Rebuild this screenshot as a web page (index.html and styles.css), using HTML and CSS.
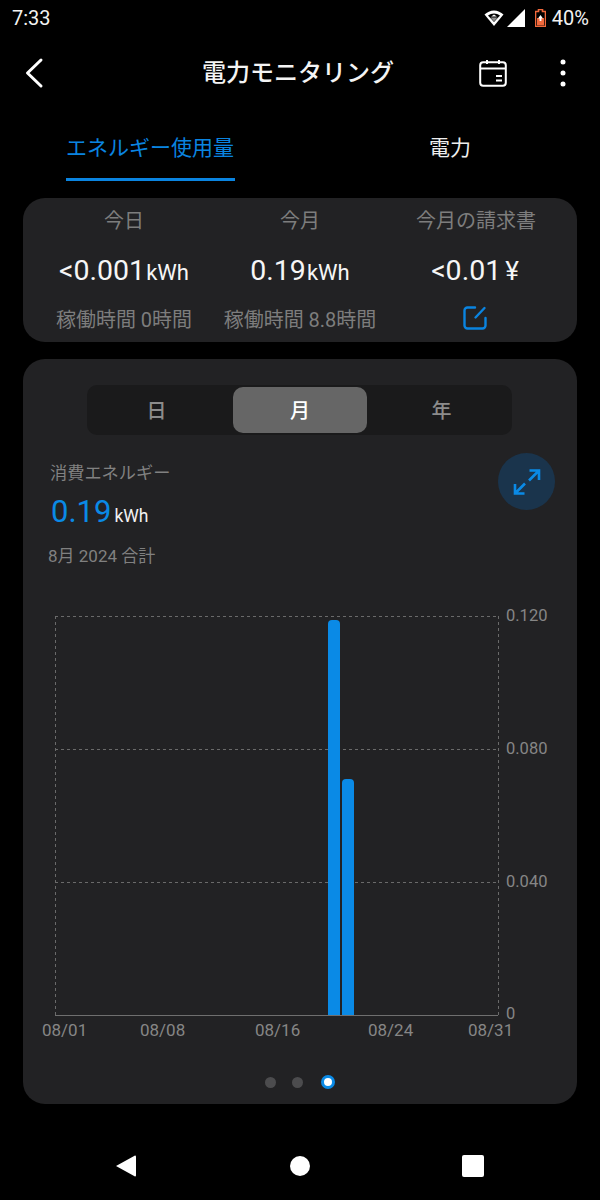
FILE: index.html
```html
<!DOCTYPE html>
<html lang="ja">
<head>
<meta charset="utf-8">
<title>電力モニタリング</title>
<link rel="stylesheet" href="styles.css">
</head>
<body>
<div class="phone">
  <div class="status">
    <span class="clock">7:33</span>
    <div class="status-right">
      <svg class="ic-wifi" width="20" height="18" viewBox="0 0 20 18"><path d="M10 17 0.5 5.5C3 3.2 6.3 1.5 10 1.5s7 1.7 9.5 4Z" fill="#fff"/><path d="M10 13 4 6.5C5.8 5.2 7.8 4.5 10 4.5s4.2.7 6 2Z" fill="#000"/><path d="M10 12.5 6.5 8.6h7Z" fill="#8f8f8f"/><path d="M7.2 7.4h5.6L10 5.6Z" fill="#fff"/></svg>
      <svg class="ic-cell" width="18" height="18" viewBox="0 0 18 18"><path d="M18 0V18H0Z" fill="#fff"/></svg>
      <svg class="ic-batt" width="11" height="18" viewBox="0 0 11 18"><path d="M3.5 0.5h4v2h3v15H0.5v-15h3Z" fill="none" stroke="#f2693c" stroke-width="1.6"/><rect x="2" y="9" width="7" height="7.5" fill="#f2693c"/><path d="M5.5 6 8 9.5H6.4V12H4.6V9.5H3Z" fill="#fff"/></svg>
      <span class="percent">40%</span>
    </div>
  </div>

  <div class="toolbar">
    <svg class="ic-back" width="20" height="32" viewBox="0 0 20 32"><path d="M17 3 3.500 16 17 29" fill="none" stroke="#fff" stroke-width="3" stroke-linecap="round" stroke-linejoin="round"/></svg>
    <h1 class="title">電力モニタリング</h1>
    <svg class="ic-cal" width="28" height="28" viewBox="0 0 28 28"><rect x="1.2" y="3.2" width="25.6" height="23.6" rx="3" fill="none" stroke="#fff" stroke-width="2"/><path d="M1.5 9.5H26.5" stroke="#fff" stroke-width="2"/><path d="M8 1V5M20 1V5" stroke="#fff" stroke-width="2"/><path d="M17 17H23M17 21.5H23" stroke="#fff" stroke-width="2"/></svg>
    <div class="more"><i></i><i></i><i></i></div>
  </div>

  <div class="tabs">
    <div class="tab tab-on">エネルギー使用量</div>
    <div class="tab tab-off">電力</div>
  </div>

  <section class="card summary">
    <div class="cell"><div class="lab">今日</div><div class="val">&lt;0.001<small>kWh</small></div><div class="lab">稼働時間 0時間</div></div>
    <div class="cell"><div class="lab">今月</div><div class="val">0.19<small>kWh</small></div><div class="lab">稼働時間 8.8時間</div></div>
    <div class="cell"><div class="lab">今月の請求書</div><div class="val">&lt;0.01<small class="yen">¥</small></div>
      <svg class="ic-edit" width="26" height="26" viewBox="0 0 26 26"><path d="M13 2.5H5.5a3 3 0 0 0-3 3v15a3 3 0 0 0 3 3h15a3 3 0 0 0 3-3V13" fill="none" stroke="#0a84e0" stroke-width="2.4" stroke-linecap="round"/><path d="M22.5 3 13.5 12.5" fill="none" stroke="#0a84e0" stroke-width="2.4" stroke-linecap="round"/></svg>
    </div>
  </section>

  <section class="card main">
    <div class="seg">
      <div class="seg-item seg-first">日</div>
      <div class="seg-item seg-on">月</div>
      <div class="seg-item seg-last">年</div>
    </div>
    <div class="head">
      <div class="head-text">
        <div class="energy">消費エネルギー</div>
        <div class="reading"><span class="num">0.19</span><span class="unit">kWh</span></div>
        <div class="period">8月 2024 合計</div>
      </div>
      <div class="expand">
        <svg width="28" height="28" viewBox="0 0 28 28"><path d="M16.5 2.5H26V12M26 2.5 16 12.5M2 16V25.5H11.5M2 25.5 12 15.5" fill="none" stroke="#0a8ae6" stroke-width="2.6"/></svg>
      </div>
    </div>
    <svg class="chart" width="554" height="450" viewBox="0 0 554 450">
      <path class="grid" d="M32 16.500H475M32 149.500H475M32 282.500H475M32.500 16V415M475.500 16V415"/>
      <path class="base" d="M32 415.500H475"/>
      <path class="bar" d="M305 415V24a4 4 0 0 1 4-4h4a4 4 0 0 1 4 4V415Z"/>
      <path class="bar" d="M319 415V183a4 4 0 0 1 4-4h4a4 4 0 0 1 4 4V415Z"/>
      <text class="ylab" x="483" y="21">0.120</text>
      <text class="ylab" x="483" y="154">0.080</text>
      <text class="ylab" x="483" y="287">0.040</text>
      <text class="ylab" x="483" y="419">0</text>
      <text x="19" y="436">08/01</text>
      <text x="117" y="436">08/08</text>
      <text x="232" y="436">08/16</text>
      <text x="345" y="436">08/24</text>
      <text x="445" y="436">08/31</text>
    </svg>
    <div class="dots"><i class="dot"></i><i class="dot"></i><i class="dot dot-on"></i></div>
  </section>

  <div class="navbar">
    <svg width="22" height="24" viewBox="0 0 22 24"><path d="M1 12 20 1.500a1 1 0 0 1 1 1V21.500a1 1 0 0 1-1 1Z" fill="#fff"/></svg>
    <svg width="20" height="20" viewBox="0 0 20 20"><circle cx="10" cy="10" r="10" fill="#fff"/></svg>
    <svg width="22" height="22" viewBox="0 0 22 22"><rect width="22" height="22" rx="2" fill="#fff"/></svg>
  </div>
</div>
</body>
</html>
```

FILE: styles.css
```css
* { box-sizing: border-box; }
html, body { margin: 0; padding: 0; background: #000; }
body { font-family: Roboto, "Noto Sans CJK JP", sans-serif; color: #fff; }
.phone { width: 600px; height: 1200px; background: #000; overflow: hidden; }

.status { height: 36px; display: flex; align-items: center; justify-content: space-between; padding: 0 11px 0 12px; }
.clock { font-size: 20px; color: #f2f2f2; }
.status-right { display: flex; align-items: center; }
.ic-wifi { margin-right: 3px; }
.ic-cell { margin-right: 10px; }
.ic-batt { margin-right: 6px; }
.percent { font-size: 20px; color: #f2f2f2; }

.toolbar { height: 74px; display: flex; align-items: center; padding: 0 0 0 24px; }
.ic-back { flex: none; }
.title { margin: 0 0 0 158px; width: 190px; font-size: 24px; line-height: 32px; font-weight: 500; white-space: nowrap; color: #f4f4f4; }
.ic-cal { margin-left: 87px; flex: none; }
.more { margin-left: 54px; display: flex; flex-direction: column; gap: 7px; }
.more i { display: block; width: 4px; height: 4px; border-radius: 50%; background: #fff; box-shadow: 0 0 0 .5px #fff; }

.tabs { height: 71px; display: flex; padding: 20px 0 0 66px; }
.tab { font-size: 21px; line-height: 36px; height: 51px; white-space: nowrap; }
.tab-on { color: #0a84e0; width: 169px; border-bottom: 3px solid #0a84e0; }
.tab-off { color: #eee; margin-left: 194px; }

.card { background: #222224; margin: 0 23px; border-radius: 22px; }
.summary { height: 144px; margin-top: 17px; display: grid; grid-template-columns: repeat(3, 1fr); padding: 0 13px; }
.cell { display: flex; flex-direction: column; align-items: center; }
.lab { font-size: 20px; line-height: 28px; color: #7d7d7d; white-space: nowrap; }
.cell .lab:first-child { margin-top: 9px; }
.val { font-size: 28.5px; line-height: 36px; margin: 18px 0 15px; color: #f6f6f6; white-space: nowrap; }
.val small { font-size: 22px; margin-left: 1px; }
.val .yen { font-size: 26px; margin-left: 4px; margin-right: 2px; }
.ic-edit { margin-top: 1px; margin-right: 2px; }

.main { height: 745px; margin-top: 17px; padding-top: 26px; }
.seg { margin: 0 65px 0 64px; height: 50px; display: flex; align-items: center; background: #1a1a1b; border-radius: 10px; padding: 0 2px; }
.seg-item { flex: 1; height: 46px; font-size: 20px; line-height: 48px; text-align: center; color: #8c8c8c; font-weight: 500; }
.seg-first { text-indent: -6px; }
.seg-last { text-indent: 4px; }
.seg-on { background: #666; color: #fff; border-radius: 10px; flex: none; width: 134px; margin: 0 2px 0 3px; }
.head { display: flex; justify-content: space-between; margin: 18px 22px 0 25px; height: 147px; }
.energy { font-size: 17.200px; line-height: 24px; margin: 8px 0 0 2px; color: #818181; white-space: nowrap; }
.reading { margin: 7px 0 0 3px; height: 40px; line-height: 40px; }
.num { font-size: 31px; color: #0a8ae6; }
.unit { font-size: 17.500px; margin-left: 3px; color: #f2f2f2; }
.period { font-size: 17px; line-height: 24px; margin-top: 12px; color: #808080; }
.expand { width: 57px; height: 57px; border-radius: 50%; background: #1a344c; display: flex; align-items: center; justify-content: center; }

.chart { display: block; margin-top: 0; }
.chart text { font-family: Roboto, sans-serif; font-size: 17px; fill: #868686; }
.chart .ylab { font-size: 16.500px; }
.grid { fill: none; stroke: #6a6a6a; stroke-width: 1; stroke-dasharray: 3 3; }
.base { stroke: #6f6f6f; stroke-width: 1; }
.bar { fill: #0a8ae6; }

.dots { display: flex; justify-content: center; align-items: center; gap: 16px; margin: 25px 0 0 0; }
.dot { display: block; width: 11px; height: 11px; border-radius: 50%; background: #4c4c4e; }
.dot-on { width: 14px; height: 14px; background: #fff; border: 3px solid #0a8ae6; margin-left: 2px; }

.navbar { height: 96px; display: flex; align-items: center; padding: 28px 116px 0 115px; justify-content: space-between; }
```
